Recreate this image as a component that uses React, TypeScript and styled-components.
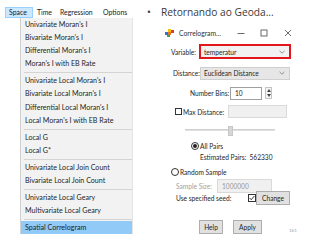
import React from "react";
import styled, { createGlobalStyle } from "styled-components";

const Global = createGlobalStyle`
  html, body { margin: 0; padding: 0; background: #ffffff; }
  body { width: 320px; height: 240px; overflow: hidden; font-family: "Lato", "Noto Sans", sans-serif; }
`;

const Page = styled.div`
  display: flex;
  width: 320px;
  height: 240px;
`;

const LeftCol = styled.div`
  width: 146px;
  flex-shrink: 0;
  display: flex;
  flex-direction: column;
  padding-top: 6.5px;
  box-sizing: border-box;
`;

const MenuBar = styled.div`
  display: flex;
  padding-left: 5px;
  height: 11px;
  align-items: center;
`;

const MenuTitle = styled.div<{ $active?: boolean; $w: number }>`
  font-size: 6.9px;
  color: #1a1a1a;
  width: ${(p) => p.$w}px;
  padding-left: 3px;
  height: 11px;
  line-height: 9px;
  background: ${(p) => (p.$active ? "#cce8ff" : "transparent")};
  border: 1px solid ${(p) => (p.$active ? "#99d1ff" : "transparent")};
  box-sizing: border-box;
  white-space: nowrap;
`;

const DropDown = styled.div`
  margin-left: 20px;
  width: 113px;
  background: #f2f2f2;
  border-left: 1px solid #d0d0d0;
  border-right: 1px solid #e4e4e4;
  box-sizing: border-box;
  display: flex;
  flex-direction: column;
`;

const Item = styled.div<{ $selected?: boolean }>`
  height: 13.3px;
  line-height: 13.3px;
  font-size: 7.1px;
  color: #1e1e1e;
  padding-left: 4px;
  white-space: nowrap;
  background: ${(p) => (p.$selected ? "#91c9f7" : "transparent")};
`;

const Sep = styled.div`
  height: 1px;
  margin: 1.3px 0 1.2px 3px;
  background: #d4d4d4;
`;

const RightCol = styled.div`
  flex: 1;
  display: flex;
  flex-direction: column;
`;

const Bullet = styled.div`
  font-family: "Open Sans", "Noto Sans", sans-serif;
  font-size: 10.2px;
  color: #3a3a3a;
  height: 24px;
  line-height: 24px;
  white-space: nowrap;
  display: flex;
`;

const BulletDot = styled.span`
  width: 14px;
  padding-left: 1px;
`;

const Dialog = styled.div`
  display: flex;
  flex-direction: column;
  font-size: 6.6px;
  color: #1e1e1e;
`;

const TitleBar = styled.div`
  display: flex;
  align-items: center;
  height: 17px;
  padding-left: 19px;
`;

const TitleText = styled.span`
  margin-left: 5px;
  font-size: 6.8px;
  color: #333;
  width: 50px;
  white-space: nowrap;
`;

const WinBtn = styled.span`
  width: 23.5px;
  display: flex;
  justify-content: center;
`;

const Row = styled.div<{ $indent: number; $h: number; $top?: number }>`
  display: flex;
  align-items: center;
  padding-left: ${(p) => p.$indent}px;
  height: ${(p) => p.$h}px;
  margin-top: ${(p) => p.$top ?? 0}px;
  white-space: nowrap;
`;

const Label = styled.span<{ $muted?: boolean; $w?: number }>`
  color: ${(p) => (p.$muted ? "#a0a0a0" : "#1e1e1e")};
  width: ${(p) => (p.$w ? `${p.$w}px` : "auto")};
  flex-shrink: 0;
`;

const Spacer = styled.span<{ $w: number }>`
  width: ${(p) => p.$w}px;
  flex-shrink: 0;
`;

const Select = styled.div<{ $w: number; $red?: boolean }>`
  width: ${(p) => p.$w}px;
  height: ${(p) => (p.$red ? 15 : 13)}px;
  box-sizing: border-box;
  border: ${(p) => (p.$red ? "2px solid #e3161c" : "1px solid #cfcfcf")};
  background: ${(p) => (p.$red ? "#f2f2f2" : "#e6e6e6")};
  display: flex;
  align-items: center;
  justify-content: space-between;
  padding: 0 4px 0 3px;
  flex-shrink: 0;
`;

const Chevron = () => (
  <svg width="6" height="4" viewBox="0 0 6 4">
    <path d="M0.5 0.8 L3 3.2 L5.5 0.8" fill="none" stroke="#888" strokeWidth="0.9" />
  </svg>
);

const Input = styled.div<{ $w: number; $h?: number; $disabled?: boolean }>`
  width: ${(p) => p.$w}px;
  height: ${(p) => p.$h ?? 13}px;
  box-sizing: border-box;
  border: 1px solid ${(p) => (p.$disabled ? "#dadada" : "#a0a0a0")};
  background: ${(p) => (p.$disabled ? "#f0f0f0" : "#ffffff")};
  color: ${(p) => (p.$disabled ? "#9a9a9a" : "#1e1e1e")};
  padding-left: 4px;
  display: flex;
  align-items: center;
  flex-shrink: 0;
`;

const Spinner = styled.div`
  margin-left: 3px;
  width: 7px;
  height: 12px;
  border: 1px solid #c4c4c4;
  box-sizing: border-box;
  background: #f4f4f4;
  display: flex;
  flex-direction: column;
  align-items: center;
  justify-content: space-around;
`;

const Box = styled.div`
  width: 7px;
  height: 7px;
  border: 1px solid #333;
  box-sizing: border-box;
  background: #fff;
  margin-right: 1px;
  flex-shrink: 0;
`;

const Radio = styled.div<{ $on?: boolean }>`
  width: 8px;
  height: 8px;
  border-radius: 50%;
  border: 1px solid #333;
  box-sizing: border-box;
  margin-right: 1px;
  display: flex;
  align-items: center;
  justify-content: center;
  flex-shrink: 0;
  &::after {
    content: "";
    width: 4px;
    height: 4px;
    border-radius: 50%;
    background: ${(p) => (p.$on ? "#222" : "transparent")};
  }
`;

const Track = styled.div`
  width: 90px;
  height: 2px;
  background: #e0e0e0;
  border-top: 1px solid #d0d0d0;
  display: flex;
  align-items: center;
  padding-left: 43px;
  box-sizing: border-box;
`;

const Thumb = styled.div`
  width: 5px;
  height: 10px;
  background: #d6d6d6;
  border: 1px solid #c6c6c6;
  box-sizing: border-box;
`;

const Button = styled.div<{ $w: number }>`
  width: ${(p) => p.$w}px;
  height: 14px;
  box-sizing: border-box;
  border: 1px solid #adadad;
  background: #e1e1e1;
  display: flex;
  align-items: center;
  justify-content: center;
  flex-shrink: 0;
`;

const PageNum = styled.span`
  font-size: 4.5px;
  color: #a0a0a0;
  margin-left: 27px;
  margin-top: 7px;
`;

const AppIcon = () => (
  <svg width="9" height="8" viewBox="0 0 9 8">
    <rect x="3" y="0" width="3" height="3" fill="#f5c400" />
    <rect x="6" y="1" width="3" height="3" fill="#e03a2f" />
    <rect x="0" y="3" width="3" height="3" fill="#2f6fd6" />
    <rect x="3" y="3" width="3" height="3" fill="#e8781e" />
    <rect x="2" y="6" width="3" height="2" fill="#3aa34a" />
  </svg>
);

const CheckMark = () => (
  <svg width="8" height="8" viewBox="0 0 8 8">
    <rect x="0.5" y="0.5" width="7" height="7" fill="#fff" stroke="#333" />
    <path d="M1.6 4 L3.2 5.7 L6.4 2" fill="none" stroke="#222" strokeWidth="0.9" />
  </svg>
);

const MinIcon = () => (
  <svg width="8" height="8" viewBox="0 0 8 8">
    <path d="M0.5 4.5 H7.5" stroke="#444" strokeWidth="0.8" />
  </svg>
);

const MaxIcon = () => (
  <svg width="8" height="8" viewBox="0 0 8 8">
    <rect x="1" y="1" width="6" height="6" fill="none" stroke="#444" strokeWidth="0.8" />
  </svg>
);

const CloseIcon = () => (
  <svg width="8" height="8" viewBox="0 0 8 8">
    <path d="M1 1 L7 7 M7 1 L1 7" stroke="#444" strokeWidth="0.8" />
  </svg>
);

const groups: string[][] = [
  ["Univariate Moran's I", "Bivariate Moran's I", "Differential Moran's I", "Moran's I with EB Rate"],
  ["Univariate Local Moran's I", "Bivariate Local Moran's I", "Differential Local Moran's I", "Local Moran's I with EB Rate"],
  ["Local G", "Local G*"],
  ["Univariate Local Join Count", "Bivariate Local Join Count"],
  ["Univariate Local Geary", "Multivariate Local Geary"],
];

export default function App() {
  return (
    <>
      <Global />
      <Page>
        <LeftCol>
          <MenuBar>
            <MenuTitle $active $w={28}>Space</MenuTitle>
            <MenuTitle $w={23}>Time</MenuTitle>
            <MenuTitle $w={43}>Regression</MenuTitle>
            <MenuTitle $w={30}>Options</MenuTitle>
          </MenuBar>
          <DropDown>
            {groups.map((g, i) => (
              <React.Fragment key={i}>
                {g.map((t) => (
                  <Item key={t}>{t}</Item>
                ))}
                <Sep />
              </React.Fragment>
            ))}
            <Item $selected>Spatial Correlogram</Item>
          </DropDown>
        </LeftCol>
        <RightCol>
          <Bullet>
            <BulletDot>•</BulletDot>
            Retornando ao Geoda...
          </Bullet>
          <Dialog>
            <TitleBar>
              <AppIcon />
              <TitleText>Correlogram...</TitleText>
              <WinBtn><MinIcon /></WinBtn>
              <WinBtn><MaxIcon /></WinBtn>
              <WinBtn><CloseIcon /></WinBtn>
            </TitleBar>
            <Row $indent={25} $h={21}>
              <Label $w={28}>Variable:</Label>
              <Select $w={92} $red>
                temperatur
                <Chevron />
              </Select>
            </Row>
            <Row $indent={27} $h={22}>
              <Label $w={27}>Distance:</Label>
              <Select $w={90}>
                Euclidean Distance
                <Chevron />
              </Select>
            </Row>
            <Row $indent={44} $h={18}>
              <Label $w={40}>Number Bins:</Label>
              <Input $w={32}>10</Input>
              <Spinner>
                <svg width="4" height="3" viewBox="0 0 4 3"><path d="M0 3 L2 0 L4 3Z" fill="#444" /></svg>
                <svg width="4" height="3" viewBox="0 0 4 3"><path d="M0 0 L2 3 L4 0Z" fill="#444" /></svg>
              </Spinner>
            </Row>
            <Row $indent={29} $h={19}>
              <Box />
              <Label $w={45}>Max Distance:</Label>
              <Input $w={59} $disabled />
            </Row>
            <Row $indent={39} $h={18}>
              <Track>
                <Thumb />
              </Track>
            </Row>
            <Row $indent={45} $h={13}>
              <Radio $on />
              <Label>All Pairs</Label>
            </Row>
            <Row $indent={54} $h={10}>
              <Label>Estimated Pairs:&nbsp; 562330</Label>
            </Row>
            <Row $indent={25} $h={19}>
              <Radio />
              <Label>Random Sample</Label>
            </Row>
            <Row $indent={30} $h={10}>
              <Label $muted $w={41}>Sample Size:</Label>
              <Input $w={55} $h={14} $disabled>1000000</Input>
            </Row>
            <Row $indent={30} $h={14}>
              <Label $w={72}>Use specified seed:</Label>
              <CheckMark />
              <Button $w={34}>Change</Button>
            </Row>
            <Row $indent={53} $h={14} $top={15}>
              <Button $w={24}>Help</Button>
              <Spacer $w={10} />
              <Button $w={29}>Apply</Button>
              <PageNum>161</PageNum>
            </Row>
          </Dialog>
        </RightCol>
      </Page>
    </>
  );
}
